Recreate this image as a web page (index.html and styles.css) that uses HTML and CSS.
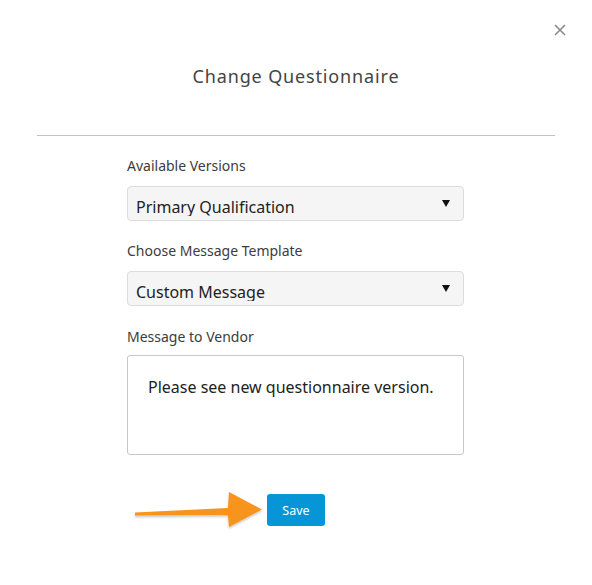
FILE: index.html
```html
<!DOCTYPE html>
<html>
<head>
<meta charset="utf-8">
<link rel="stylesheet" href="styles.css">
</head>
<body>
<div class="modal">
  <button class="close" aria-label="Close">
    <svg width="12" height="12" viewBox="0 0 12 12"><path d="M1 1L11 11M11 1L1 11" stroke="#8a8a8a" stroke-width="1.6"/></svg>
  </button>
  <div class="header">
    <h1 class="title">Change Questionnaire</h1>
  </div>
  <div class="form">
    <div class="label l1">Available Versions</div>
    <div class="select">
      <span class="select-text">Primary Qualification</span>
      <span class="caret"></span>
    </div>
    <div class="label l2">Choose Message Template</div>
    <div class="select">
      <span class="select-text">Custom Message</span>
      <span class="caret"></span>
    </div>
    <div class="label l3">Message to Vendor</div>
    <div class="textarea">Please see new questionnaire version.</div>
  </div>
  <div class="actions">
    <svg class="arrow" width="132" height="42" viewBox="0 0 132 42">
      <defs>
        <filter id="sh" x="-10%" y="-20%" width="120%" height="150%">
          <feDropShadow dx="0" dy="1.5" stdDeviation="1.2" flood-color="#000" flood-opacity="0.25"/>
        </filter>
      </defs>
      <path filter="url(#sh)" fill="#f7941d" d="M2 23.5 L95 19 L96 3 L129 20.5 L96 38 L95 26 L2 26.5 Z"/>
    </svg>
    <button class="save">Save</button>
  </div>
</div>
</body>
</html>
```
FILE: styles.css
```css
* { box-sizing: border-box; }
html, body { margin: 0; padding: 0; background: #fff; }
body { font-family: "Noto Sans", "Open Sans", sans-serif; color: #333; }
.modal { position: relative; width: 592px; height: 585px; }
.close {
  position: absolute; top: 24px; left: 554px;
  width: 12px; height: 12px; padding: 0; border: 0; background: none;
  display: flex;
}
.header {
  margin: 0 37px 0 37px;
  padding-top: 63px;
  height: 136px;
  border-bottom: 1px solid #c4c4c4;
  text-align: center;
}
.title {
  margin: 0; font-size: 18px; font-weight: 400; color: #444;
  line-height: 26px; letter-spacing: 0.85px;
}
.form { width: 337px; margin-left: 127px; padding-top: 20px; }
.label { font-size: 14px; line-height: 20px; color: #3c3c3c; }
.l1 { margin-bottom: 10px; }
.l2 { margin-top: 20px; margin-bottom: 10px; }
.l3 { margin-top: 21px; margin-bottom: 8px; }
.select {
  height: 35px;
  background: #f5f5f5;
  border: 1px solid #dcdcdc;
  border-radius: 4px;
  display: flex; align-items: flex-start;
  padding: 0 13px 0 8px;
}
.select-text {
  flex: 1;
  font-size: 16px; line-height: 22px; color: #222;
  height: 29px; padding-top: 9px; overflow: hidden;
  display: block;
}
.caret {
  width: 0; height: 0; margin-top: 13px;
  border-left: 4.5px solid transparent;
  border-right: 4.5px solid transparent;
  border-top: 7px solid #111;
}
.textarea {
  height: 100px;
  border: 1px solid #c8c8c8;
  border-radius: 3px;
  padding: 20px 20px;
  font-size: 16px; line-height: 22px; color: #222;
}
.actions {
  display: flex; align-items: center;
  margin-left: 133px; margin-top: 34px;
}
.arrow { display: block; margin-right: 2px; }
.save {
  width: 58px; height: 32px;
  border: 0; border-radius: 3px;
  background: #0696d7; color: #fff;
  font-family: "Noto Sans", "Open Sans", sans-serif;
  font-size: 12.5px; padding: 0;
}
```
